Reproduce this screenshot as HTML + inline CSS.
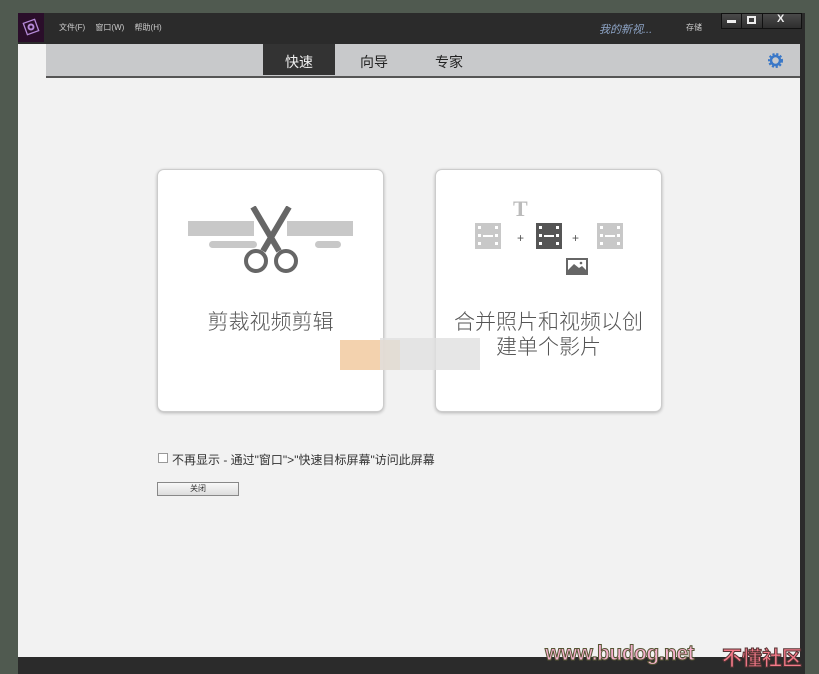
<!DOCTYPE html><html><head><meta charset="utf-8"><style>
*{margin:0;padding:0;box-sizing:border-box}
body{width:819px;height:674px;background:#505a50;position:relative;overflow:hidden;font-family:"Liberation Sans","Noto Sans CJK SC",sans-serif}
.a{position:absolute}
.card{position:absolute;top:169px;width:227px;height:243px;background:#fff;border:1px solid #ccc;border-radius:7px;box-shadow:0 1px 3px rgba(0,0,0,.25)}
.ct{position:absolute;left:0;right:0;text-align:center;font-size:21px;color:#555;line-height:25px;font-weight:300}
.wb{position:absolute;top:13px;height:16px;background:linear-gradient(#4a4a4a,#2e2e2e);border:1px solid #111}
</style></head><body>
<div class="a" style="left:18px;top:13px;width:787px;height:661px;background:#2b2b2b"></div>
<div class="a" style="left:18px;top:13px;width:26px;height:29px;background:#2a0e2a"></div>
<svg class="a" style="left:21px;top:17px" width="20" height="20"><rect x="4" y="4" width="12" height="12" transform="rotate(-20 10 10)" fill="none" stroke="#b58ad8" stroke-width="1.3"/><circle cx="10" cy="10" r="3.5" fill="#b58ad8"/><circle cx="10" cy="10" r="1.5" fill="#2a0e2a"/></svg>
<div class="a" style="left:59px;top:22px;font-size:8px;color:#ccc;word-spacing:8px">文件(F) 窗口(W) 帮助(H)</div>
<div class="a" style="left:599px;top:21px;font-size:11px;color:#8fa6c8;font-style:italic">我的新视...</div>
<div class="a" style="left:686px;top:22px;font-size:8px;color:#ccc">存储</div>
<div class="wb" style="left:721px;width:21px"></div>
<div class="wb" style="left:741px;width:22px"></div>
<div class="wb" style="left:762px;width:40px"></div>
<div class="a" style="left:727px;top:20px;width:9px;height:3px;background:#eee"></div>
<div class="a" style="left:747px;top:16px;width:9px;height:8px;border:2px solid #eee"></div>
<div class="a" style="left:777px;top:13px;font-size:11px;font-weight:bold;color:#eee">X</div>
<div class="a" style="left:18px;top:44px;width:782px;height:613px;background:#f2f2f2"></div>
<div class="a" style="left:46px;top:44px;width:754px;height:32px;background:#c8c9cb"></div>
<div class="a" style="left:46px;top:76px;width:754px;height:2px;background:#555"></div>
<div class="a" style="left:263px;top:44px;width:72px;height:31px;background:#333"></div>
<div class="a" style="left:285px;top:52px;font-size:14px;color:#eee">快速</div>
<div class="a" style="left:360px;top:52px;font-size:14px;color:#222">向导</div>
<div class="a" style="left:435px;top:52px;font-size:14px;color:#222">专家</div>
<svg class="a" style="left:767px;top:52px" width="17" height="17"><circle cx="8.5" cy="8.5" r="6" fill="none" stroke="#3a78c8" stroke-width="3" stroke-dasharray="2 1.6"/><circle cx="8.5" cy="8.5" r="4.5" fill="none" stroke="#3a78c8" stroke-width="2.5"/></svg>
<div class="card" style="left:157px">
<svg class="a" style="left:30px;top:36px" width="166" height="68">
<rect x="0" y="15" width="66" height="15" fill="#c8c8c8"/><rect x="99" y="15" width="66" height="15" fill="#c8c8c8"/>
<rect x="21" y="35" width="48" height="7" rx="3.5" fill="#c8c8c8"/><rect x="127" y="35" width="26" height="7" rx="3.5" fill="#c8c8c8"/>
<path d="M65 1 L91 45 M101 1 L75 45" stroke="#666" stroke-width="6" stroke-linecap="butt"/>
<circle cx="68" cy="55" r="10" fill="none" stroke="#666" stroke-width="4"/><circle cx="98" cy="55" r="10" fill="none" stroke="#666" stroke-width="4"/>
</svg>
<div class="ct" style="top:140px">剪裁视频剪辑</div></div>
<div class="card" style="left:435px">
<div class="a" style="left:77px;top:26px;font-size:22px;font-weight:bold;color:#bbb;font-family:'Liberation Serif',serif">T</div>
<svg class="a" style="left:39px;top:53px" width="150" height="58">
<g fill="#c8c8c8"><rect x="0" y="0" width="26" height="26"/></g>
<g fill="#555"><rect x="61" y="0" width="26" height="26"/></g>
<g fill="#c8c8c8"><rect x="122" y="0" width="26" height="26"/></g>
<g fill="#fff"><rect x="3" y="3" width="3" height="3"/><rect x="3" y="11" width="3" height="3"/><rect x="3" y="19" width="3" height="3"/><rect x="20" y="3" width="3" height="3"/><rect x="20" y="11" width="3" height="3"/><rect x="20" y="19" width="3" height="3"/><rect x="8" y="12" width="10" height="2"/>
<rect x="64" y="3" width="3" height="3"/><rect x="64" y="11" width="3" height="3"/><rect x="64" y="19" width="3" height="3"/><rect x="81" y="3" width="3" height="3"/><rect x="81" y="11" width="3" height="3"/><rect x="81" y="19" width="3" height="3"/><rect x="69" y="12" width="10" height="2"/>
<rect x="125" y="3" width="3" height="3"/><rect x="125" y="11" width="3" height="3"/><rect x="125" y="19" width="3" height="3"/><rect x="142" y="3" width="3" height="3"/><rect x="142" y="11" width="3" height="3"/><rect x="142" y="19" width="3" height="3"/><rect x="130" y="12" width="10" height="2"/></g>
<text x="42" y="19" font-size="12" fill="#555">+</text><text x="97" y="19" font-size="12" fill="#555">+</text>
<rect x="91" y="35" width="22" height="17" fill="#666"/><rect x="93" y="37" width="18" height="10" fill="#fff"/><path d="M93 47 L99 41 L104 45 L107 43 L111 47 Z" fill="#666"/><circle cx="106" cy="40" r="1.3" fill="#666"/>
</svg>
<div class="ct" style="top:140px">合并照片和视频以创<br>建单个影片</div></div>
<div class="a" style="left:340px;top:340px;width:60px;height:30px;background:#f0c79a;opacity:.8"></div>
<div class="a" style="left:380px;top:338px;width:100px;height:32px;background:#e0e0e0;opacity:.8"></div>
<div class="a" style="left:158px;top:453px;width:10px;height:10px;border:1px solid #999;background:#fff"></div>
<div class="a" style="left:172px;top:451px;font-size:12px;color:#333">不再显示 - 通过"窗口">"快速目标屏幕"访问此屏幕</div>
<div class="a" style="left:157px;top:482px;width:82px;height:14px;border:1px solid #888;background:linear-gradient(#f8f8f8,#ddd);font-size:8px;text-align:center;line-height:12px;color:#333">关闭</div>
<div class="a" style="left:545px;top:642px;font-size:21px;font-weight:bold;color:#f4b0cc;-webkit-text-stroke:1px #553;letter-spacing:-0.5px">www.budog.net</div>
<div class="a" style="left:722px;top:642px;font-size:20px;font-weight:bold;color:#f47a8a;-webkit-text-stroke:1px #533">不懂社区</div>
</body></html>
